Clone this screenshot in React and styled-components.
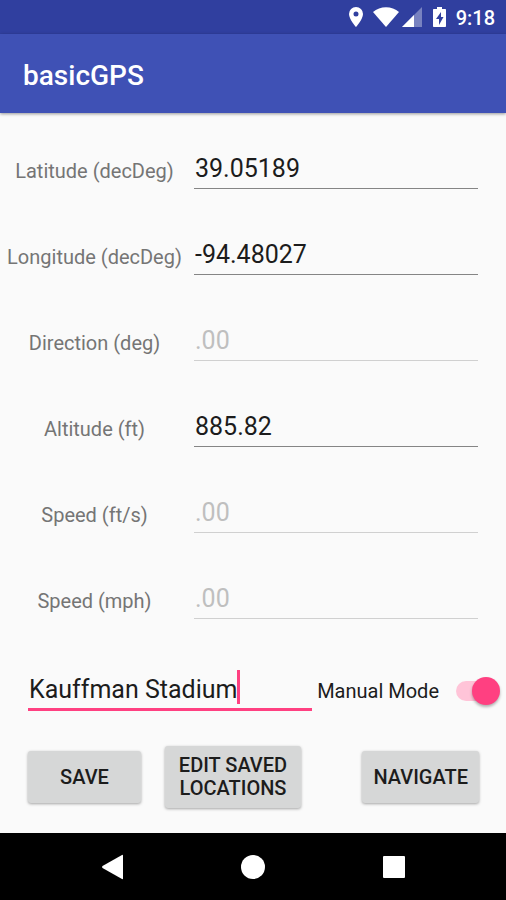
import React, { useState } from "react";
import styled, { createGlobalStyle } from "styled-components";

const GlobalStyle = createGlobalStyle`
  *, *::before, *::after { box-sizing: border-box; }
  body {
    margin: 0;
    background: #fafafa;
    color: #1c1c1c;
    font-family: Roboto, "Liberation Sans", sans-serif;
  }
  input, button { font-family: inherit; margin: 0; }
`;

const Screen = styled.div`
  display: flex;
  flex-direction: column;
  min-height: 100vh;
`;

const StatusBar = styled.div`
  display: flex;
  align-items: center;
  justify-content: flex-end;
  height: 34px;
  padding-right: 11px;
  background: #303f9f;
  color: #fff;
  svg { display: block; flex: none; }
`;

const StatusIcons = styled.div`
  display: flex;
  align-items: center;
  margin-right: 9px;
`;

const Clock = styled.time`
  font-size: 20px;
  font-weight: 500;
  line-height: 24px;
  padding-top: 2px;
`;

const AppBar = styled.header`
  display: flex;
  align-items: center;
  height: 79px;
  padding: 4px 23px 0;
  background: #3f51b5;
  box-shadow: 0 1px 3px rgba(0, 0, 0, 0.4);
`;

const Title = styled.h1`
  margin: 0;
  color: #fff;
  font-size: 28px;
  font-weight: 500;
  line-height: 36px;
`;

const Content = styled.main`
  flex: 1;
  padding: 35px 0 24px;
`;

const Fields = styled.div`
  display: grid;
  gap: 45px;
  padding-right: 28px;
`;

const Field = styled.div`
  display: grid;
  grid-template-columns: 189px minmax(0, 1fr);
  column-gap: 5px;
  align-items: center;
`;

const Label = styled.label`
  padding-top: 4px;
  color: #757575;
  font-size: 20px;
  line-height: 24px;
  text-align: center;
`;

const ValueInput = styled.input`
  width: 100%;
  height: 41px;
  padding: 1px 0 0 1px;
  border: 0;
  border-bottom: 1px solid ${(p) => (p.disabled ? "#d0d0d0" : "#858585")};
  border-radius: 0;
  outline: 0;
  background: transparent;
  color: #1c1c1c;
  font-size: 25px;
  &::placeholder { color: #bfbfbf; opacity: 1; }
`;

const EntryRow = styled.div`
  display: flex;
  align-items: center;
  margin-top: 51px;
  padding: 0 6px 0 28px;
`;

const NameField = styled.div`
  display: grid;
  flex: 1;
  min-width: 0;
`;

const NameInput = styled(ValueInput)`
  grid-area: 1 / 1;
  border-bottom: 3px solid #ff4081;
  caret-color: transparent;
`;

const CaretTrack = styled.span`
  grid-area: 1 / 1;
  display: flex;
  align-items: center;
  overflow: hidden;
  height: 34px;
  padding-left: 1px;
  pointer-events: none;
  white-space: pre;
  color: transparent;
  font-size: 25px;
  &::after {
    content: "";
    width: 3px;
    height: 34px;
    background: #ff4081;
  }
`;

const SwitchLabel = styled.label`
  display: flex;
  align-items: center;
  gap: 17px;
  margin-left: 5px;
  font-size: 20px;
  line-height: 24px;
  white-space: nowrap;
`;

const Switch = styled.input`
  appearance: none;
  position: relative;
  display: flex;
  align-items: center;
  justify-content: ${(p) => (p.checked ? "flex-end" : "flex-start")};
  width: 44px;
  height: 28px;
  &::before {
    content: "";
    position: absolute;
    inset: 4px 4px 4px 0;
    border-radius: 10px;
    background: ${(p) => (p.checked ? "#ffc4d8" : "#b9b9b9")};
  }
  &::after {
    content: "";
    position: relative;
    width: 28px;
    height: 28px;
    border-radius: 50%;
    background: ${(p) => (p.checked ? "#ff4081" : "#fafafa")};
    box-shadow: 0 2px 3px rgba(0, 0, 0, 0.3);
  }
`;

const Actions = styled.div`
  display: flex;
  align-items: center;
  gap: 24px;
  margin-top: 35px;
  padding: 0 27px 0 28px;
`;

const ActionButton = styled.button`
  min-width: 113px;
  min-height: 52px;
  padding: 8px 11px;
  border: 0;
  border-radius: 3px;
  background: #d6d7d7;
  box-shadow: 0 1px 3px rgba(0, 0, 0, 0.35);
  color: #1c1c1c;
  font-size: 20px;
  font-weight: 500;
  line-height: 23px;
  text-transform: uppercase;
  ${(p) => p.$wide && "width: 136px;"}
  ${(p) => p.$end && "margin-left: auto;"}
`;

const NavBar = styled.nav`
  display: flex;
  align-items: center;
  justify-content: center;
  gap: 73px;
  height: 67px;
  background: #000;
`;

const NavButton = styled.button`
  display: grid;
  place-items: center;
  width: 68px;
  height: 48px;
  padding: 0;
  border: 0;
  background: transparent;
  color: #fff;
`;

const FIELDS = [
  { id: "latitude", label: "Latitude (decDeg)", value: "39.05189" },
  { id: "longitude", label: "Longitude (decDeg)", value: "-94.48027" },
  { id: "direction", label: "Direction (deg)", value: "" },
  { id: "altitude", label: "Altitude (ft)", value: "885.82" },
  { id: "speed-fts", label: "Speed (ft/s)", value: "" },
  { id: "speed-mph", label: "Speed (mph)", value: "" },
];

function StatusGlyphs() {
  return (
    <StatusIcons aria-hidden="true">
      <svg width="100" height="22" viewBox="0 0 100 22" fill="#fff">
        <path
          fillRule="evenodd"
          d="M9 1a7 7 0 0 0-7 7c0 5.300 7 13 7 13s7-7.700 7-13a7 7 0 0 0-7-7Zm0 4.500a2.500 2.500 0 1 1 0 5 2.500 2.500 0 0 1 0-5Z"
        />
        <path d="M26 6C33-.3 45-.3 52 6L39 21Z" />
        <path d="M75 1V21H55Z" opacity=".35" />
        <path d="M67 9V21H55Z" />
        <path
          fillRule="evenodd"
          d="M90 1h5v2h3c.6 0 1 .4 1 1v16c0 .6-.4 1-1 1H87c-.6 0-1-.4-1-1V4c0-.6.400-1 1-1h3ZM94 6l-5 7h3v6l4.500-8H94Z"
        />
      </svg>
    </StatusIcons>
  );
}

export default function App() {
  const [values, setValues] = useState(() =>
    Object.fromEntries(FIELDS.map((f) => [f.id, f.value]))
  );
  const [name, setName] = useState("Kauffman Stadium");
  const [manual, setManual] = useState(true);

  return (
    <Screen>
      <GlobalStyle />
      <StatusBar>
        <StatusGlyphs />
        <Clock>9:18</Clock>
      </StatusBar>
      <AppBar>
        <Title>basicGPS</Title>
      </AppBar>
      <Content>
        <Fields>
          {FIELDS.map((f) => (
            <Field key={f.id}>
              <Label htmlFor={f.id}>{f.label}</Label>
              <ValueInput
                id={f.id}
                placeholder=".00"
                disabled={!f.value}
                value={values[f.id]}
                onChange={(e) => setValues({ ...values, [f.id]: e.target.value })}
              />
            </Field>
          ))}
        </Fields>
        <EntryRow>
          <NameField>
            <NameInput
              aria-label="Location name"
              value={name}
              onChange={(e) => setName(e.target.value)}
            />
            <CaretTrack aria-hidden="true">{name}</CaretTrack>
          </NameField>
          <SwitchLabel>
            Manual Mode
            <Switch
              type="checkbox"
              role="switch"
              checked={manual}
              onChange={(e) => setManual(e.target.checked)}
            />
          </SwitchLabel>
        </EntryRow>
        <Actions>
          <ActionButton type="button">Save</ActionButton>
          <ActionButton type="button" $wide>Edit Saved Locations</ActionButton>
          <ActionButton type="button" $end>Navigate</ActionButton>
        </Actions>
      </Content>
      <NavBar aria-label="System">
        <NavButton type="button" aria-label="Back">
          <svg width="24" height="26" viewBox="0 0 24 26" fill="#fff">
            <path d="M23 1.500v23q0 1-1 .5L2.500 14q-1-1 0-2L22 1q1-.5 1 .5Z" />
          </svg>
        </NavButton>
        <NavButton type="button" aria-label="Home">
          <svg width="24" height="24" viewBox="0 0 24 24" fill="#fff">
            <circle cx="12" cy="12" r="12" />
          </svg>
        </NavButton>
        <NavButton type="button" aria-label="Recent apps">
          <svg width="22" height="22" viewBox="0 0 22 22" fill="#fff">
            <rect width="22" height="22" rx="1" />
          </svg>
        </NavButton>
      </NavBar>
    </Screen>
  );
}
